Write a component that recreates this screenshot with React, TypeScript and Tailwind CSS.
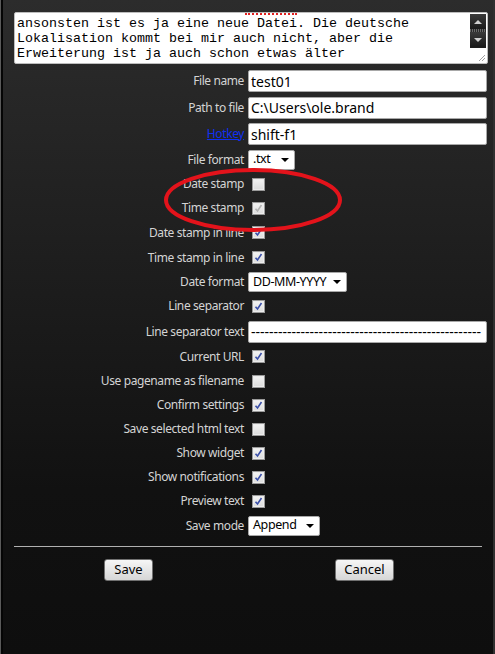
import React from "react";

const labelFont = { fontFamily: '"Noto Sans", "Open Sans", sans-serif' };

function Check({ checked, disabled }: { checked?: boolean; disabled?: boolean }) {
  return (
    <div className="ml-[4px] w-[13px] h-[13px] border border-[#9a9a9a] bg-[linear-gradient(to_bottom,#f4f4f4,#dcdcdc)] flex items-center justify-center">
      <div className="w-[11px] h-[11px] border border-[#ececec] flex items-center justify-center">
        {checked && (
          <svg width="9" height="9" viewBox="0 0 9 9">
            <path
              d="M1.5 4.8 L3.5 7 L7.5 1"
              fill="none"
              stroke={disabled ? "#b4b4b4" : "#3a4fa8"}
              strokeWidth="1.6"
            />
          </svg>
        )}
      </div>
    </div>
  );
}

function Row({ label, h, children, link }: { label: string; h: string; children: React.ReactNode; link?: boolean }) {
  return (
    <div className={`flex items-center ${h}`}>
      <div className="w-[244px] text-right text-[12px] tracking-[-0.4px] text-[#d4d4d4] leading-none whitespace-nowrap" style={labelFont}>
        {link ? <span className="text-[#1030f0] underline">{label}</span> : label}
      </div>
      <div className="ml-[4px] flex items-center">{children}</div>
    </div>
  );
}

function TextIn({ value }: { value: string }) {
  return (
    <div
      className="w-[239px] h-[22px] bg-white border border-[#a8a8a8] rounded-[2px] flex items-center pl-[2px] text-[14px] text-black overflow-hidden whitespace-nowrap"
      style={labelFont}
    >
      {value}
    </div>
  );
}

function Sel({ value, w }: { value: string; w: string }) {
  return (
    <div
      className={`${w} h-[20px] bg-white border border-[#a8a8a8] rounded-[2px] flex items-center justify-between pl-[4px] pr-[5px] text-[12.5px] tracking-[-0.4px] text-black whitespace-nowrap`}
      style={labelFont}
    >
      <span>{value}</span>
      <svg width="8" height="4" viewBox="0 0 8 4">
        <path d="M0 0 L8 0 L4 4 Z" fill="#000" />
      </svg>
    </div>
  );
}

export default function App() {
  return (
    <div className="w-[495px] h-[654px] flex bg-[#0a0a0a] overflow-hidden">
      <div className="w-[1px] h-full bg-[#5a5a5a]" />
      <div className="w-[2px] h-full bg-[#050505]" />
      <div className="relative flex-1 h-full bg-[linear-gradient(to_bottom,#2c2c2c_0%,#1c1c1c_45%,#111111_75%,#0e0e0e_100%)] border-r-[2px] border-r-[#303030] pl-[11px] pt-[12px]">
        {/* textarea */}
        <div className="relative w-[474px] h-[52px] bg-white border border-[#bdbdbd] rounded-[2px] overflow-hidden">
          <div className="absolute left-[230px] top-[0px] w-[52px] border-t-2 border-dotted border-t-[#e02020]" />
          <div
            className="pl-[2px] pt-[3px] text-[13.33px] leading-[15px] text-black whitespace-pre"
            style={{ fontFamily: '"Liberation Mono", monospace' }}
          >
            {"ansonsten ist es ja eine neue Datei. Die deutsche\nLokalisation kommt bei mir auch nicht, aber die\nErweiterung ist ja auch schon etwas älter"}
          </div>
          <div className="absolute right-[1px] top-[1px] w-[16px] h-[34px] bg-[#1e1e1e] flex flex-col">
            <div className="h-[15px] flex items-center justify-center bg-[linear-gradient(to_bottom,#3a3a3a,#1a1a1a)]">
              <svg width="8" height="4" viewBox="0 0 8 4">
                <path d="M0 4 L8 4 L4 0 Z" fill="#cfcfcf" />
              </svg>
            </div>
            <div className="h-[3px] bg-[repeating-linear-gradient(to_right,#6a6a6a_0px,#6a6a6a_1px,#2a2a2a_1px,#2a2a2a_2px)]" />
            <div className="h-[15px] flex items-center justify-center bg-[linear-gradient(to_bottom,#3a3a3a,#1a1a1a)]">
              <svg width="8" height="4" viewBox="0 0 8 4">
                <path d="M0 0 L8 0 L4 4 Z" fill="#cfcfcf" />
              </svg>
            </div>
          </div>
          <svg className="absolute right-[1px] bottom-[1px]" width="9" height="9" viewBox="0 0 9 9">
            <path d="M8 2 L2 8 M8 5 L5 8" stroke="#a0a0a0" strokeWidth="1" />
          </svg>
        </div>

        {/* form rows; labels end at page x 244 */}
        <div className="mt-[4px] -ml-[14px]">
          <Row label="File name" h="h-[26.5px]"><TextIn value="test01" /></Row>
          <Row label="Path to file" h="h-[26.5px]"><TextIn value="C:\Users\ole.brand" /></Row>
          <Row label="Hotkey" h="h-[26px]" link><TextIn value="shift-f1" /></Row>
          <Row label="File format" h="h-[25px]"><Sel value=".txt" w="w-[47px]" /></Row>
          <Row label="Date stamp" h="h-[24px]"><Check /></Row>
          <Row label="Time stamp" h="h-[24.5px]"><Check checked disabled /></Row>
          <Row label="Date stamp in line" h="h-[24.5px]"><Check checked /></Row>
          <Row label="Time stamp in line" h="h-[25px]"><Check checked /></Row>
          <Row label="Date format" h="h-[24px]"><Sel value="DD-MM-YYYY" w="w-[99px]" /></Row>
          <Row label="Line separator" h="h-[24.5px]"><Check checked /></Row>
          <Row label="Line separator text" h="h-[26px]">
            <TextIn value="---------------------------------------------------" />
          </Row>
          <Row label="Current URL" h="h-[24.5px]"><Check checked /></Row>
          <Row label="Use pagename as filename" h="h-[24px]"><Check /></Row>
          <Row label="Confirm settings" h="h-[24px]"><Check checked /></Row>
          <Row label="Save selected html text" h="h-[24px]"><Check /></Row>
          <Row label="Show widget" h="h-[24px]"><Check checked /></Row>
          <Row label="Show notifications" h="h-[24px]"><Check checked /></Row>
          <Row label="Preview text" h="h-[24px]"><Check checked /></Row>
          <Row label="Save mode" h="h-[25px]"><Sel value="Append" w="w-[72px]" /></Row>
        </div>

        <div className="mt-[8px] w-[468px] h-[1px] bg-[#b0b0b0]" />

        <div className="mt-[12px] flex">
          <button
            className="ml-[90px] w-[49px] h-[22px] border border-[#707070] rounded-[3px] bg-[linear-gradient(to_bottom,#f6f6f6_0%,#e6e6e6_50%,#d6d6d6_100%)] text-[13px] text-black"
            style={labelFont}
          >
            Save
          </button>
          <button
            className="ml-[182px] w-[59px] h-[22px] border border-[#707070] rounded-[3px] bg-[linear-gradient(to_bottom,#f6f6f6_0%,#e6e6e6_50%,#d6d6d6_100%)] text-[13px] text-black"
            style={labelFont}
          >
            Cancel
          </button>
        </div>

        <svg className="absolute left-[158px] top-[166px] pointer-events-none" width="184" height="68" viewBox="0 0 184 68">
          <ellipse cx="92" cy="34" rx="87" ry="30" fill="none" stroke="#e3131b" strokeWidth="4" />
        </svg>
      </div>
    </div>
  );
}
